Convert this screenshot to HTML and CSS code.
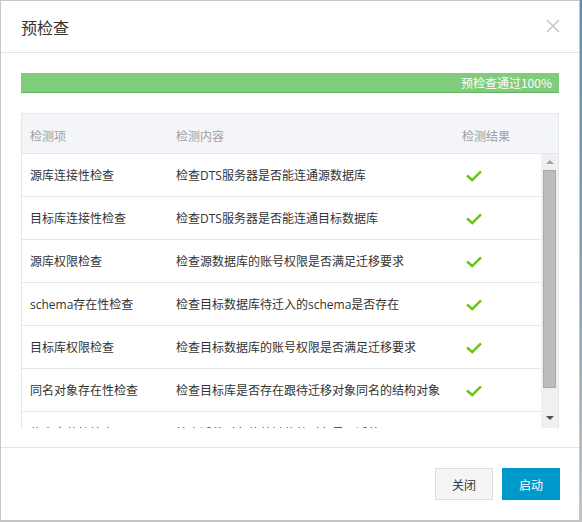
FILE: index.html
```html
<!DOCTYPE html>
<html lang="zh">
<head>
<meta charset="utf-8">
<title>预检查</title>
<link rel="stylesheet" href="styles.css">
</head>
<body>
<div class="dialog">
  <div class="dlg-header">
    <span class="dlg-title">预检查</span>
    <svg class="close" width="14" height="14" viewBox="0 0 14 14"><path d="M1 1L13 13M13 1L1 13" stroke="#c8c8c8" stroke-width="1.6" fill="none"/></svg>
  </div>
  <div class="dlg-body">
    <div class="progress"><span>预检查通过100%</span></div>
    <div class="table">
      <div class="thead">
        <div class="c1">检测项</div>
        <div class="c2">检测内容</div>
        <div class="c3">检测结果</div>
      </div>
      <div class="tbody-wrap">
        <div class="tbody">
          <div class="row"><div class="c1">源库连接性检查</div><div class="c2">检查DTS服务器是否能连通源数据库</div><div class="c3 ok"><svg width="16" height="12" viewBox="0 0 16 12"><polyline points="1,5.5 6.2,10 15,1.3" fill="none" stroke="#66c614" stroke-width="2.4"/></svg></div></div>
          <div class="row"><div class="c1">目标库连接性检查</div><div class="c2">检查DTS服务器是否能连通目标数据库</div><div class="c3 ok"><svg width="16" height="12" viewBox="0 0 16 12"><polyline points="1,5.5 6.2,10 15,1.3" fill="none" stroke="#66c614" stroke-width="2.4"/></svg></div></div>
          <div class="row"><div class="c1">源库权限检查</div><div class="c2">检查源数据库的账号权限是否满足迁移要求</div><div class="c3 ok"><svg width="16" height="12" viewBox="0 0 16 12"><polyline points="1,5.5 6.2,10 15,1.3" fill="none" stroke="#66c614" stroke-width="2.4"/></svg></div></div>
          <div class="row"><div class="c1">schema存在性检查</div><div class="c2">检查目标数据库待迁入的schema是否存在</div><div class="c3 ok"><svg width="16" height="12" viewBox="0 0 16 12"><polyline points="1,5.5 6.2,10 15,1.3" fill="none" stroke="#66c614" stroke-width="2.4"/></svg></div></div>
          <div class="row"><div class="c1">目标库权限检查</div><div class="c2">检查目标数据库的账号权限是否满足迁移要求</div><div class="c3 ok"><svg width="16" height="12" viewBox="0 0 16 12"><polyline points="1,5.5 6.2,10 15,1.3" fill="none" stroke="#66c614" stroke-width="2.4"/></svg></div></div>
          <div class="row"><div class="c1">同名对象存在性检查</div><div class="c2">检查目标库是否存在跟待迁移对象同名的结构对象</div><div class="c3 ok"><svg width="16" height="12" viewBox="0 0 16 12"><polyline points="1,5.5 6.2,10 15,1.3" fill="none" stroke="#66c614" stroke-width="2.4"/></svg></div></div>
          <div class="row"><div class="c1">约束完整性检查</div><div class="c2">检查迁移对象的外键依赖对象是否迁移</div><div class="c3 ok"><svg width="16" height="12" viewBox="0 0 16 12"><polyline points="1,5.5 6.2,10 15,1.3" fill="none" stroke="#66c614" stroke-width="2.4"/></svg></div></div>
        </div>
        <div class="scrollbar">
          <div class="arrow up"></div>
          <div class="thumb"></div>
          <div class="arrow down"></div>
        </div>
      </div>
    </div>
  </div>
  <div class="dlg-footer">
    <button class="btn btn-default">关闭</button>
    <button class="btn btn-primary">启动</button>
  </div>
</div>
</body>
</html>
```

FILE: styles.css
```css
* { box-sizing: border-box; }
html, body { margin: 0; padding: 0; }
body {
  width: 582px;
  height: 522px;
  background: linear-gradient(#5d8fae, #8ea3b0 60%, #c4c4c4);
  font-family: "Open Sans", "Noto Sans CJK SC", sans-serif;
  font-size: 12px;
  color: #333;
  overflow: hidden;
}
.dialog {
  width: 580px;
  height: 521px;
  background: #fff;
  border: 1px solid #c3c8cc;
  display: flex;
  flex-direction: column;
}
.dlg-header {
  height: 52px;
  border-bottom: 1px solid #e3e3e3;
  display: flex;
  align-items: center;
  justify-content: space-between;
  padding: 0 19px 0 20px;
  flex: none;
}
.dlg-title {
  font-family: "Noto Sans CJK SC", sans-serif;
  font-size: 16px;
  color: #333;
  padding-top: 1px;
}
.close { display: block; margin-top: -1px; }
.dlg-body {
  padding: 20px 20px 0 20px;
  flex: none;
}
.progress {
  height: 20px;
  background: #7fcc7c;
  border-bottom: 1px solid #5fb55c;
  display: flex;
  justify-content: flex-end;
  align-items: center;
  padding-right: 7px;
}
.progress span {
  color: #fff;
  font-family: "Noto Sans CJK SC", sans-serif;
  font-size: 12px;
  line-height: 19px;
}
.table {
  margin-top: 20px;
  border: 1px solid #e3e6eb;
  border-bottom: none;
  width: 538px;
}
.thead {
  display: flex;
  height: 40px;
  background: #f4f5f9;
  border-bottom: 1px solid #e3e6eb;
  color: #a0a0a0;
  align-items: center;
  padding-top: 4px;
}
.c1 { width: 146px; padding-left: 8px; flex: none; }
.c2 { width: 286px; padding-left: 8px; flex: none; white-space: nowrap; }
.c3 { flex: 1; padding-left: 8px; }
.c3.ok { padding-left: 12px; display: flex; align-items: center; }
.c3 svg { display: block; margin-top: 1px; }
.tbody-wrap {
  display: flex;
  height: 274px;
  overflow: hidden;
}
.tbody { flex: 1; min-width: 0; }
.row {
  display: flex;
  align-items: center;
  height: 43px;
  border-bottom: 1px solid #e3e6eb;
  color: #333;
  white-space: nowrap;
}
.scrollbar {
  width: 17px;
  flex: none;
  background: #f0f0f0;
  display: flex;
  flex-direction: column;
  align-items: center;
}
.arrow { width: 0; height: 0; border-left: 4px solid transparent; border-right: 4px solid transparent; flex: none; }
.arrow.up { border-bottom: 4px solid #a3a3a3; margin-top: 6px; }
.arrow.down { border-top: 4px solid #505050; margin-top: 28px; }
.thumb {
  width: 13px;
  height: 218px;
  margin-top: 6px;
  background: #bcbcbc;
  border: 1px solid #a9a9a9;
  flex: none;
}
.dlg-footer {
  margin-top: 19px;
  border-top: 1px solid #e3e3e3;
  padding: 20px 19px 0 0;
  display: flex;
  justify-content: flex-end;
  gap: 9px;
}
.btn {
  width: 58px;
  height: 32px;
  font-family: "Noto Sans CJK SC", sans-serif;
  font-size: 12px;
  border: 1px solid #ddd;
  padding: 0;
  margin: 0;
}
.btn-default { background: #f5f5f5; color: #333; }
.btn-primary { background: #0099cc; border-color: #0099cc; color: #fff; }
```
